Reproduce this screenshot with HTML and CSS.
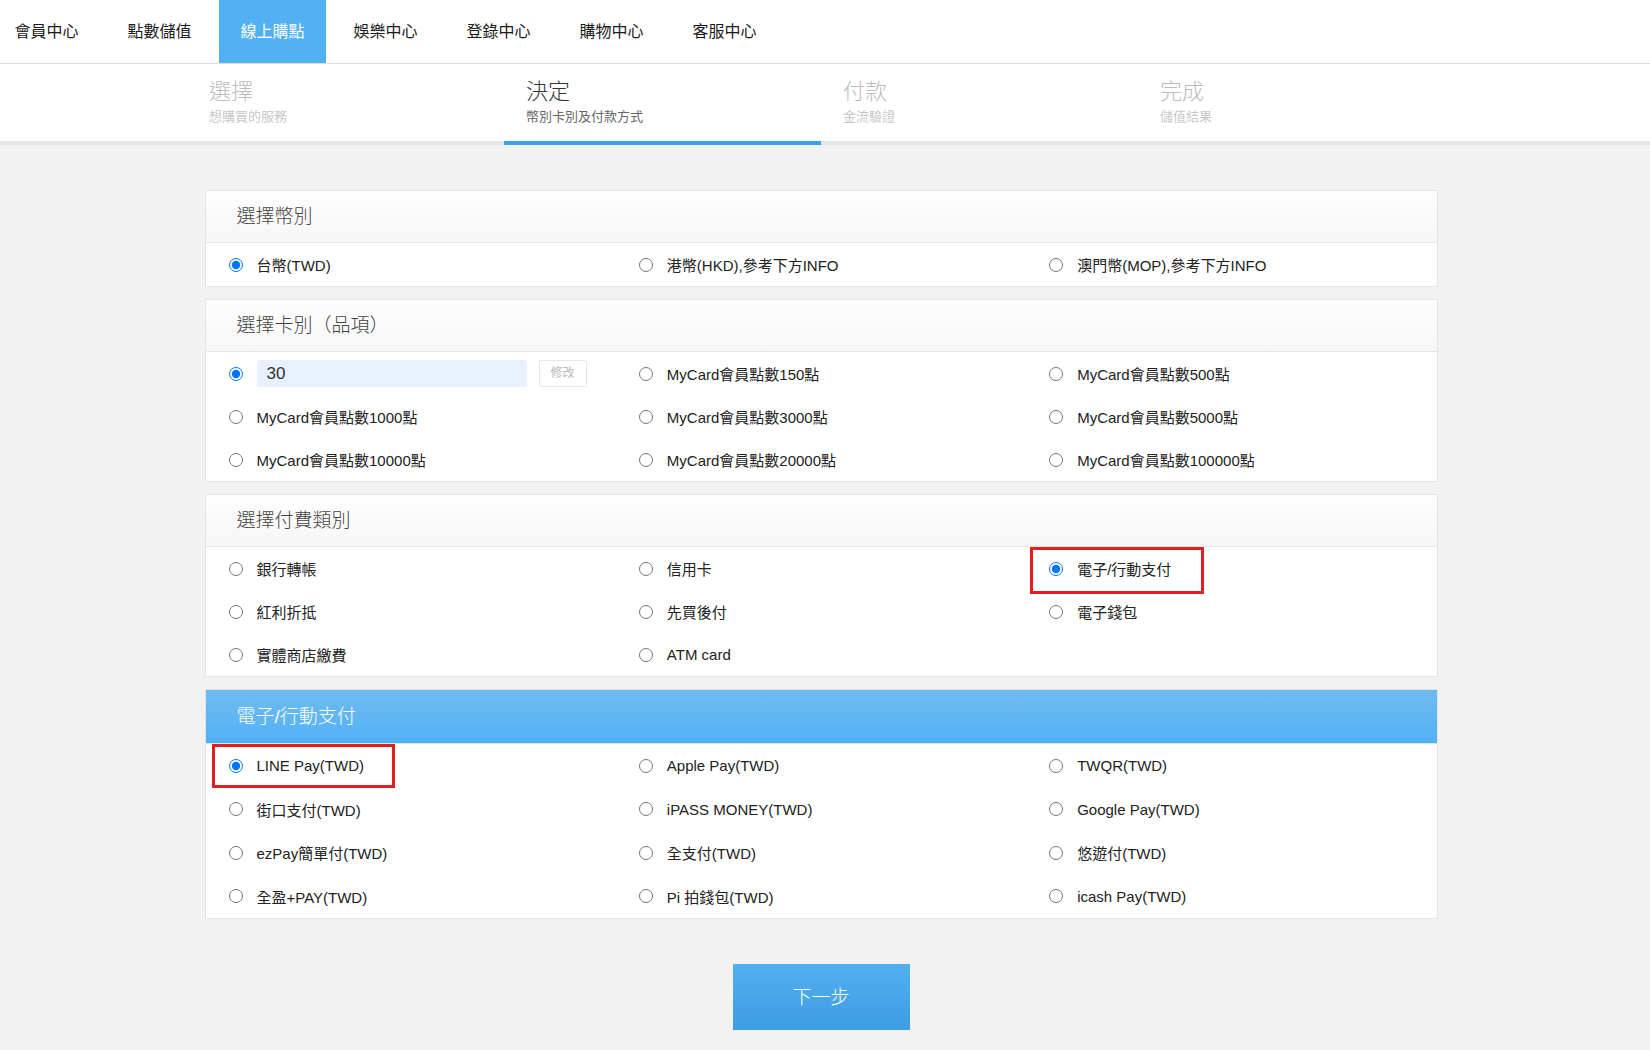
FILE: index.html
```html
<!DOCTYPE html>
<html lang="zh-Hant">
<head>
  <meta charset="UTF-8" />
  <meta name="viewport" content="width=device-width, initial-scale=1.0" />
  <title>線上購點</title>
  <link rel="stylesheet" href="styles.css">
</head>
<body>
  <header class="topnav">
    <ul>
      <li><a href="#">會員中心</a></li>
      <li><a href="#">點數儲值</a></li>
      <li class="active"><a href="#">線上購點</a></li>
      <li><a href="#">娛樂中心</a></li>
      <li><a href="#">登錄中心</a></li>
      <li><a href="#">購物中心</a></li>
      <li><a href="#">客服中心</a></li>
    </ul>
  </header>

  <div class="steps">
    <div class="steps-inner">
      <div class="step"><div class="step-title">選擇</div><div class="step-sub">想購買的服務</div></div>
      <div class="step current"><div class="step-title">決定</div><div class="step-sub">幣別卡別及付款方式</div></div>
      <div class="step"><div class="step-title">付款</div><div class="step-sub">金流驗證</div></div>
      <div class="step"><div class="step-title">完成</div><div class="step-sub">儲值結果</div></div>
    </div>
  </div>

  <main class="content">
    <section class="panel">
      <div class="panel-head">選擇幣別</div>
      <div class="options">
        <label class="opt"><input type="radio" name="currency" checked /> 台幣(TWD)</label>
        <label class="opt"><input type="radio" name="currency" /> 港幣(HKD),參考下方INFO</label>
        <label class="opt"><input type="radio" name="currency" /> 澳門幣(MOP),參考下方INFO</label>
      </div>
    </section>

    <section class="panel">
      <div class="panel-head">選擇卡別（品項）</div>
      <div class="options">
        <label class="opt"><input type="radio" name="card" checked /><span class="qty-input">30</span><span class="edit-btn">修改</span></label>
        <label class="opt"><input type="radio" name="card" /> MyCard會員點數150點</label>
        <label class="opt"><input type="radio" name="card" /> MyCard會員點數500點</label>
        <label class="opt"><input type="radio" name="card" /> MyCard會員點數1000點</label>
        <label class="opt"><input type="radio" name="card" /> MyCard會員點數3000點</label>
        <label class="opt"><input type="radio" name="card" /> MyCard會員點數5000點</label>
        <label class="opt"><input type="radio" name="card" /> MyCard會員點數10000點</label>
        <label class="opt"><input type="radio" name="card" /> MyCard會員點數20000點</label>
        <label class="opt"><input type="radio" name="card" /> MyCard會員點數100000點</label>
      </div>
    </section>

    <section class="panel">
      <div class="panel-head">選擇付費類別</div>
      <div class="options">
        <label class="opt"><input type="radio" name="paytype" /> 銀行轉帳</label>
        <label class="opt"><input type="radio" name="paytype" /> 信用卡</label>
        <label class="opt"><input type="radio" name="paytype" checked /> 電子/行動支付<span class="mark mark-type"></span></label>
        <label class="opt"><input type="radio" name="paytype" /> 紅利折抵</label>
        <label class="opt"><input type="radio" name="paytype" /> 先買後付</label>
        <label class="opt"><input type="radio" name="paytype" /> 電子錢包</label>
        <label class="opt"><input type="radio" name="paytype" /> 實體商店繳費</label>
        <label class="opt"><input type="radio" name="paytype" /> ATM card</label>
      </div>
    </section>

    <section class="panel">
      <div class="panel-head blue">電子/行動支付</div>
      <div class="options tall">
        <label class="opt"><input type="radio" name="method" checked /> LINE Pay(TWD)<span class="mark mark-line"></span></label>
        <label class="opt"><input type="radio" name="method" /> Apple Pay(TWD)</label>
        <label class="opt"><input type="radio" name="method" /> TWQR(TWD)</label>
        <label class="opt"><input type="radio" name="method" /> 街口支付(TWD)</label>
        <label class="opt"><input type="radio" name="method" /> iPASS MONEY(TWD)</label>
        <label class="opt"><input type="radio" name="method" /> Google Pay(TWD)</label>
        <label class="opt"><input type="radio" name="method" /> ezPay簡單付(TWD)</label>
        <label class="opt"><input type="radio" name="method" /> 全支付(TWD)</label>
        <label class="opt"><input type="radio" name="method" /> 悠遊付(TWD)</label>
        <label class="opt"><input type="radio" name="method" /> 全盈+PAY(TWD)</label>
        <label class="opt"><input type="radio" name="method" /> Pi 拍錢包(TWD)</label>
        <label class="opt"><input type="radio" name="method" /> icash Pay(TWD)</label>
      </div>
    </section>

    <div class="actions">
      <button class="next-btn">下一步</button>
    </div>
  </main>
</body>
</html>
```

FILE: styles.css
```css
body { margin: 0; background: #f2f2f2; color: #333; font-family: "Liberation Sans", "Noto Sans CJK TC", sans-serif; }
a { text-decoration: none; color: inherit; }

.topnav { background: #fff; border-bottom: 1px solid #dedede; height: 63px; }
.topnav ul { list-style: none; margin: 0 0 0 -13px; padding: 0; display: flex; height: 63px; }
.topnav li { margin-left: 6px; }
.topnav li a { display: block; padding: 0 21.5px; line-height: 63px; font-size: 16px; color: #1a1a1a; }
.topnav li.active a { background: #52b1f2; color: #fff; }

.steps { background: #fff; border-bottom: 4px solid #e6e6e6; padding-right: 8px; }
.steps-inner { width: 1268px; margin: 0 auto; display: flex; }
.step { flex: 1; padding: 14px 22px 16px; margin-bottom: -4px; border-bottom: 4px solid transparent; }
.step-title { font-size: 22px; line-height: 28px; font-weight: 300; color: #bcbcbc; }
.step-sub { font-size: 13px; line-height: 16px; margin-top: 3px; color: #c8c8c8; }
.step.current { border-bottom-color: #3d9fe6; }
.step.current .step-title { color: #333; }
.step.current .step-sub { color: #666; }

.content { width: 1233px; margin: 0 auto; padding: 45px 8px 21px 0; }
.panel { background: #fff; border: 1px solid #e4e4e4; margin-bottom: 12px; }
.panel-head { height: 51px; line-height: 51px; padding-left: 31px; font-size: 19px; font-weight: 300; color: #444; background: linear-gradient(#fefefe, #f6f6f6); border-bottom: 1px solid #e6e6e6; }
.panel-head.blue { background: linear-gradient(#70bbf0, #51b1f5); color: #fff; border-bottom-color: #cfe6f8; height: 53px; line-height: 53px; }

.options { display: grid; grid-template-columns: repeat(3, 1fr); grid-auto-rows: 43px; }
.options.tall { grid-auto-rows: 43.5px; }
.opt { position: relative; display: flex; align-items: center; padding-left: 23px; font-size: 15px; color: #222; }
.opt input { margin: 0 14px 0 0; width: 14px; height: 14px; }

.qty-input { width: 260px; height: 27px; line-height: 27px; padding-left: 10px; background: #e8f0fe; border-radius: 3px; font-size: 17px; color: #333; }
.edit-btn { margin-left: 12px; width: 46px; height: 25px; line-height: 25px; text-align: center; border: 1px solid #e6e6e6; border-radius: 2px; font-size: 12px; color: #bbb; }

.mark { position: absolute; border: 3px solid #e21f1f; }
.mark-type { left: 4px; top: 0; width: 168px; height: 41px; }
.mark-line { left: 6px; top: 0; width: 177px; height: 38px; }

.actions { display: flex; justify-content: center; padding-top: 33px; }
.next-btn { width: 177px; height: 66px; padding-bottom: 4px; border: 0; background: linear-gradient(#52aff0, #3d9de2); color: #fff; font-size: 19px; font-family: inherit; font-weight: 300; cursor: pointer; }
```
